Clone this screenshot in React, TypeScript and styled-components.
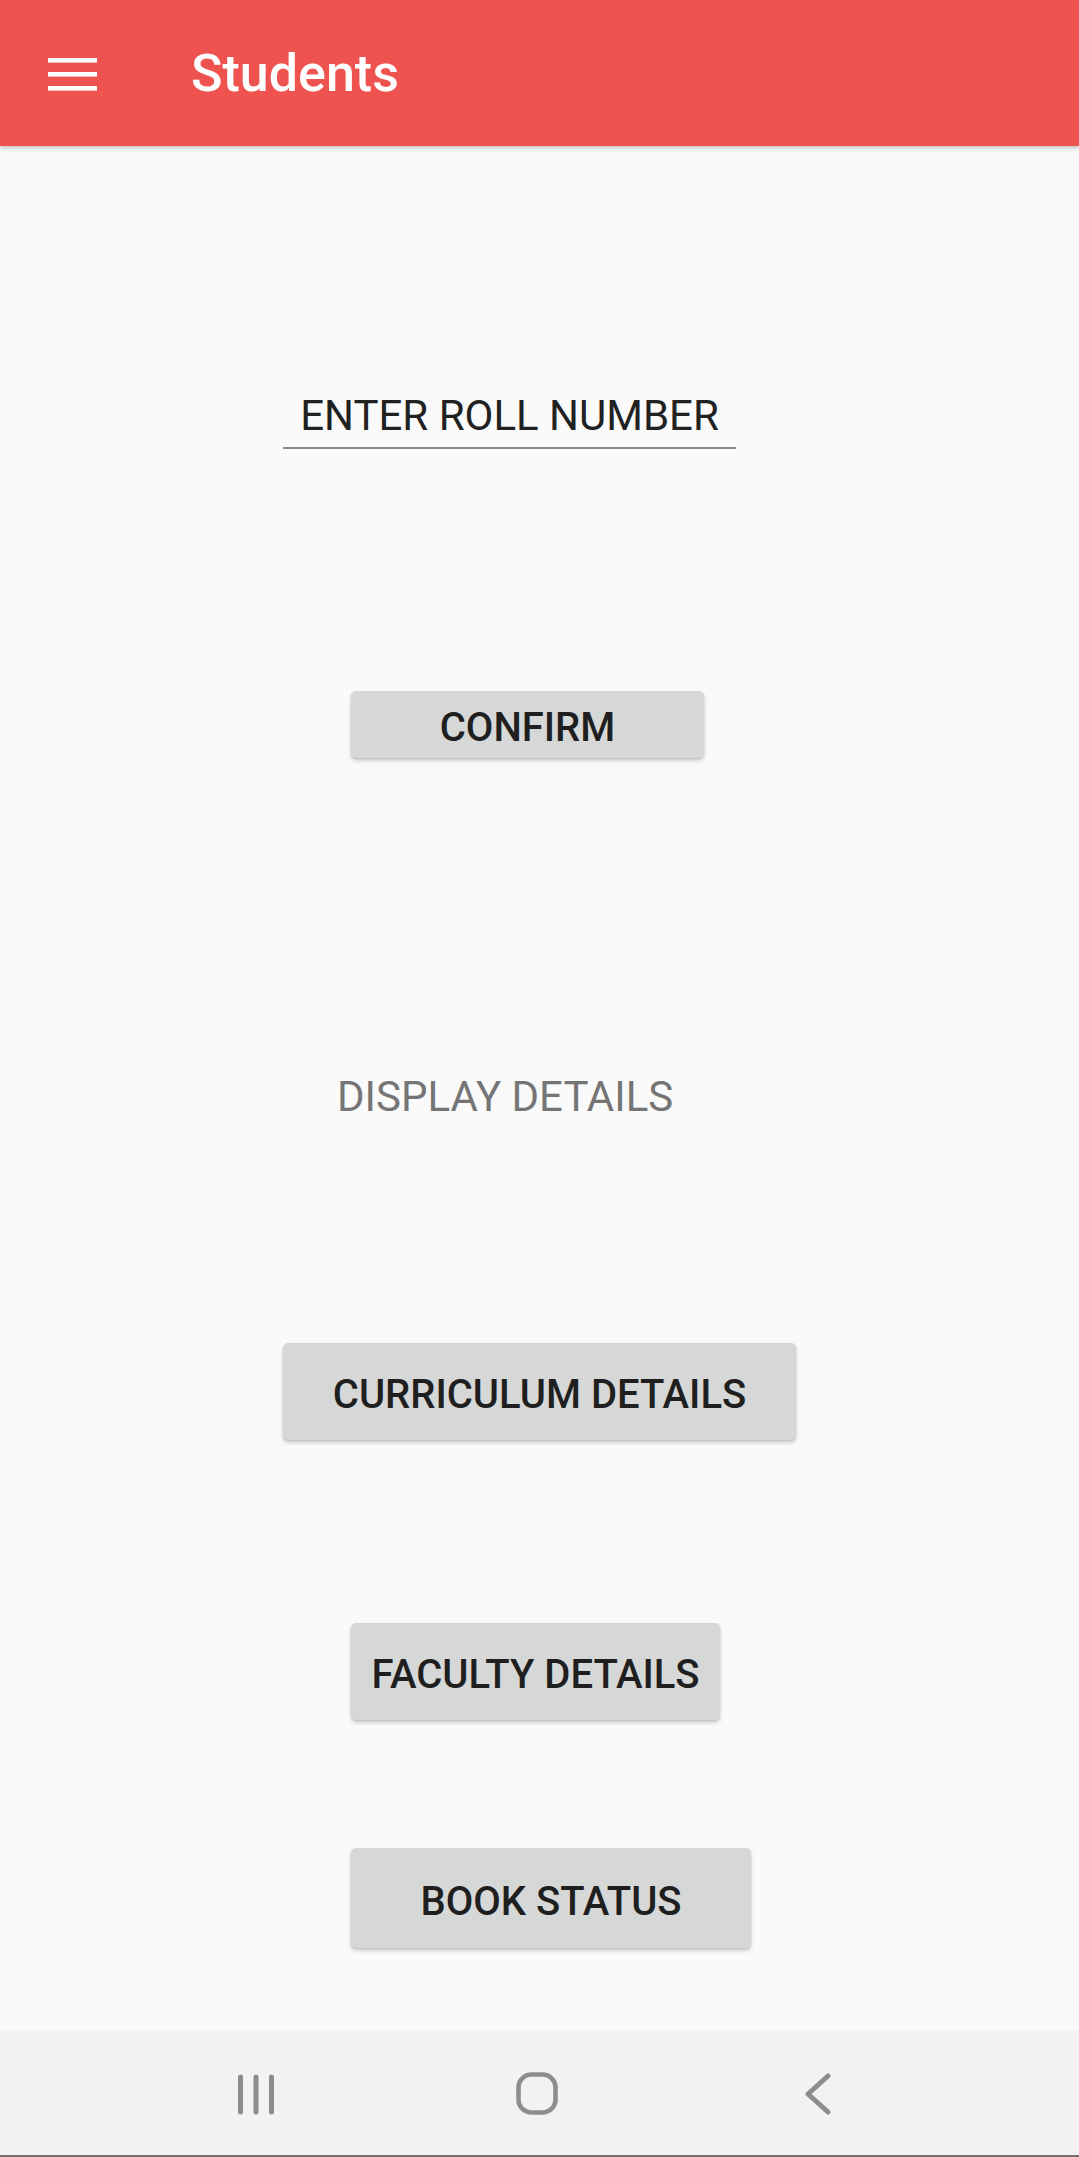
import React from "react";
import styled, { createGlobalStyle } from "styled-components";

const GlobalStyle = createGlobalStyle`
  html, body {
    margin: 0;
    padding: 0;
    background: #fafafa;
  }
  * { box-sizing: border-box; }
`;

const Screen = styled.div`
  display: flex;
  flex-direction: column;
  height: 100vh;
  width: 100%;
  background: #fafafa;
  font-family: Roboto, "Liberation Sans", sans-serif;
  overflow: hidden;
`;

const AppBar = styled.header`
  flex: 0 0 146px;
  height: 146px;
  background: #ef5350;
  display: flex;
  align-items: center;
  padding-left: 48px;
  box-shadow: 0 2px 4px rgba(0, 0, 0, 0.22);
  position: relative;
  z-index: 1;
`;

const MenuButton = styled.div`
  width: 49px;
  height: 33px;
  display: flex;
  margin-right: 94px;
  margin-top: 2px;
`;

const Title = styled.h1`
  margin: 0;
  font-family: Roboto, "Liberation Sans", sans-serif;
  font-weight: 500;
  font-size: 52px;
  color: #ffffff;
  letter-spacing: 0;
`;

const Content = styled.main`
  flex: 1 1 auto;
  display: flex;
  flex-direction: column;
  align-items: flex-start;
`;

const RollInput = styled.div`
  margin-top: 245px;
  margin-left: 283px;
  width: 453px;
  padding-bottom: 7px;
  border-bottom: 2px solid #8a8a8a;
  text-align: center;
  font-size: 42px;
  line-height: 49px;
  font-weight: 400;
  color: #212121;
`;

const Label = styled.div<{ $top: number; $left: number }>`
  margin-top: ${(p) => p.$top}px;
  margin-left: ${(p) => p.$left}px;
  font-size: 42px;
  line-height: 49px;
  font-weight: 400;
  color: #757575;
`;

const RaisedButton = styled.button<{
  $top: number;
  $left: number;
  $w: number;
  $h: number;
}>`
  margin-top: ${(p) => p.$top}px;
  margin-left: ${(p) => p.$left}px;
  width: ${(p) => p.$w}px;
  height: ${(p) => p.$h}px;
  display: flex;
  align-items: center;
  justify-content: center;
  padding: 6px 0 0 0;
  border: none;
  border-radius: 5px;
  background: #d6d7d7;
  color: #1f1f1f;
  font-family: Roboto, "Liberation Sans", sans-serif;
  font-weight: 500;
  font-size: 40px;
  text-transform: uppercase;
  box-shadow: 0 3px 4px rgba(0, 0, 0, 0.16), 0 1px 2px rgba(0, 0, 0, 0.12);
`;

const NavBar = styled.nav`
  flex: 0 0 127px;
  background: #f2f2f2;
  border-bottom: 2px solid #707070;
  display: flex;
  justify-content: center;
  align-items: center;
  padding-right: 5px;
`;

const NavSlot = styled.div`
  width: 281px;
  display: flex;
  justify-content: center;
  align-items: center;
  margin-top: 2px;
`;

const MenuIcon = () => (
  <svg width="49" height="33" viewBox="0 0 49 33">
    <rect x="0" y="0" width="49" height="4.6" fill="#fff" />
    <rect x="0" y="14" width="49" height="4.6" fill="#fff" />
    <rect x="0" y="28" width="49" height="4.6" fill="#fff" />
  </svg>
);

const RecentsIcon = () => (
  <svg width="40" height="42" viewBox="0 0 40 42">
    <g stroke="#8d8d8d" strokeWidth="5" strokeLinecap="round">
      <line x1="4.5" y1="4" x2="4.5" y2="39" />
      <line x1="20" y1="4" x2="20" y2="39" />
      <line x1="35.5" y1="4" x2="35.5" y2="39" />
    </g>
  </svg>
);

const HomeIcon = () => (
  <svg width="42" height="43" viewBox="0 0 42 43">
    <rect
      x="2.5"
      y="2.5"
      width="37"
      height="38"
      rx="13"
      fill="none"
      stroke="#8d8d8d"
      strokeWidth="4.6"
    />
  </svg>
);

const BackIcon = () => (
  <svg width="28" height="42" viewBox="0 0 28 42">
    <polyline
      points="24,3 4,21 24,39"
      fill="none"
      stroke="#8d8d8d"
      strokeWidth="5"
      strokeLinecap="round"
      strokeLinejoin="round"
    />
  </svg>
);

export default function App() {
  return (
    <>
      <GlobalStyle />
      <Screen>
        <AppBar>
          <MenuButton>
            <MenuIcon />
          </MenuButton>
          <Title>Students</Title>
        </AppBar>
        <Content>
          <RollInput>ENTER ROLL NUMBER</RollInput>
          <RaisedButton $top={242} $left={351} $w={353} $h={67}>
            Confirm
          </RaisedButton>
          <Label $top={314} $left={337}>
            DISPLAY DETAILS
          </Label>
          <RaisedButton $top={222} $left={283} $w={513} $h={97}>
            Curriculum Details
          </RaisedButton>
          <RaisedButton $top={183} $left={351} $w={369} $h={97}>
            Faculty Details
          </RaisedButton>
          <RaisedButton $top={128} $left={351} $w={400} $h={100}>
            Book Status
          </RaisedButton>
        </Content>
        <NavBar>
          <NavSlot>
            <RecentsIcon />
          </NavSlot>
          <NavSlot>
            <HomeIcon />
          </NavSlot>
          <NavSlot>
            <BackIcon />
          </NavSlot>
        </NavBar>
      </Screen>
    </>
  );
}
